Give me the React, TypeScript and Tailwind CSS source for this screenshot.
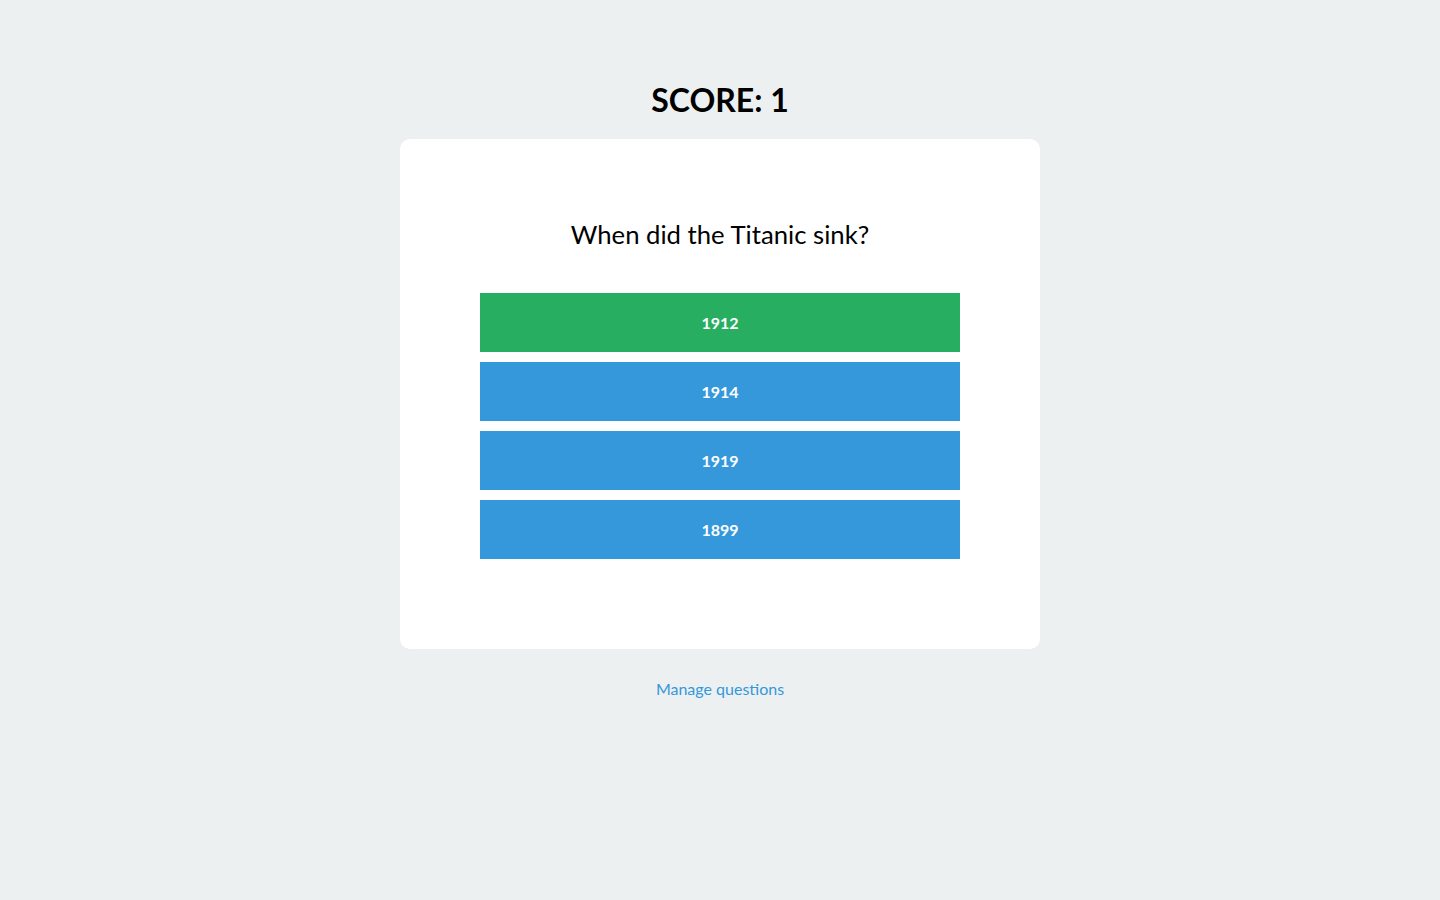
import React from 'react';

const answers = [
  { label: '1912', correct: true },
  { label: '1914', correct: false },
  { label: '1919', correct: false },
  { label: '1899', correct: false },
];

const App: React.FC = () => {
  return (
    <div className="min-h-screen bg-[#ecf0f1] font-['Lato','Liberation_Sans',sans-serif] text-black flex flex-col items-center pt-[78px]">
      <h1 className="text-[32px] leading-[44px] font-bold">SCORE: 1</h1>
      <div className="mt-[17px] w-[640px] bg-white rounded-[10px] px-[80px] pt-[80px] pb-[80px]">
        <h2 className="text-[25.7px] leading-[30px] text-center mb-[44px]">When did the Titanic sink?</h2>
        <div className="flex flex-col">
          {answers.map((a) => (
            <button
              key={a.label}
              className={`h-[59px] mb-[10px] w-full pt-[1px] text-white font-bold text-[16px] ${a.correct ? 'bg-[#27ae60]' : 'bg-[#3498db]'}`}
            >
              {a.label}
            </button>
          ))}
        </div>
      </div>
      <a href="#" className="mt-[30px] text-[16px] leading-[20px] text-[#3498db]">Manage questions</a>
    </div>
  );
};

export default App;
